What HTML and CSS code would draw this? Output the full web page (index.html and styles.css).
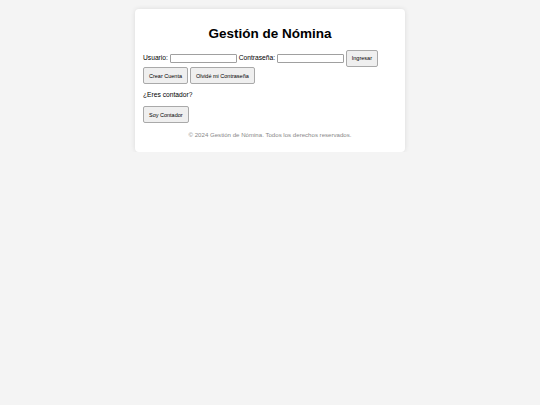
FILE: index.html
```html
<!DOCTYPE html>
<html lang="es">
<head>
<meta charset="utf-8">
<title>Gestión de Nómina</title>
<link rel="stylesheet" href="styles.css">
</head>
<body>
<div class="card">
  <h1 class="title">Gestión de Nómina</h1>
  <form class="login">
    <label>Usuario:</label> <input type="text" class="field"> <label>Contraseña:</label> <input type="password" class="field"> <button type="button" class="btn">Ingresar</button> <button type="button" class="btn">Crear Cuenta</button> <button type="button" class="btn">Olvidé mi Contraseña</button>
  </form>
  <p class="question">¿Eres contador?</p>
  <button type="button" class="btn">Soy Contador</button>
  <footer class="foot">© 2024 Gestión de Nómina. Todos los derechos reservados.</footer>
</div>
</body>
</html>
```
FILE: styles.css
```css
html, body {
  margin: 0;
  padding: 0;
}
body {
  background: #f4f4f4;
  font-family: "Liberation Sans", Arial, sans-serif;
  font-size: 6.7px;
  color: #000;
}
.card {
  width: 254px;
  margin: 9px auto 0;
  padding: 8px;
  background: #fff;
  border-radius: 4px;
  box-shadow: 0 0 5px rgba(0, 0, 0, 0.1);
}
.title {
  font-size: 13.5px;
  font-weight: bold;
  text-align: center;
  margin: 8px 0 7px;
  line-height: 17px;
}
.login {
  margin: 0;
  line-height: 17px;
}
.field {
  box-sizing: border-box;
  width: 67px;
  height: 9px;
  padding: 0;
  margin: 0;
  border: 1px solid #a0a0a0;
  border-radius: 1px;
  vertical-align: middle;
  font-size: 6px;
}
.btn {
  box-sizing: border-box;
  height: 17px;
  padding: 0 5px;
  margin: 0;
  font-family: "Liberation Sans", Arial, sans-serif;
  font-size: 5.5px;
  color: #000;
  background: #efefef;
  border: 1px solid #a9a9a9;
  border-radius: 2px;
  vertical-align: middle;
}
.question {
  margin: 6px 0 6px;
  line-height: 10px;
}
.foot {
  margin-top: 7px;
  margin-bottom: 5px;
  text-align: center;
  font-size: 6.1px;
  color: #888;
  line-height: 9px;
}
```
